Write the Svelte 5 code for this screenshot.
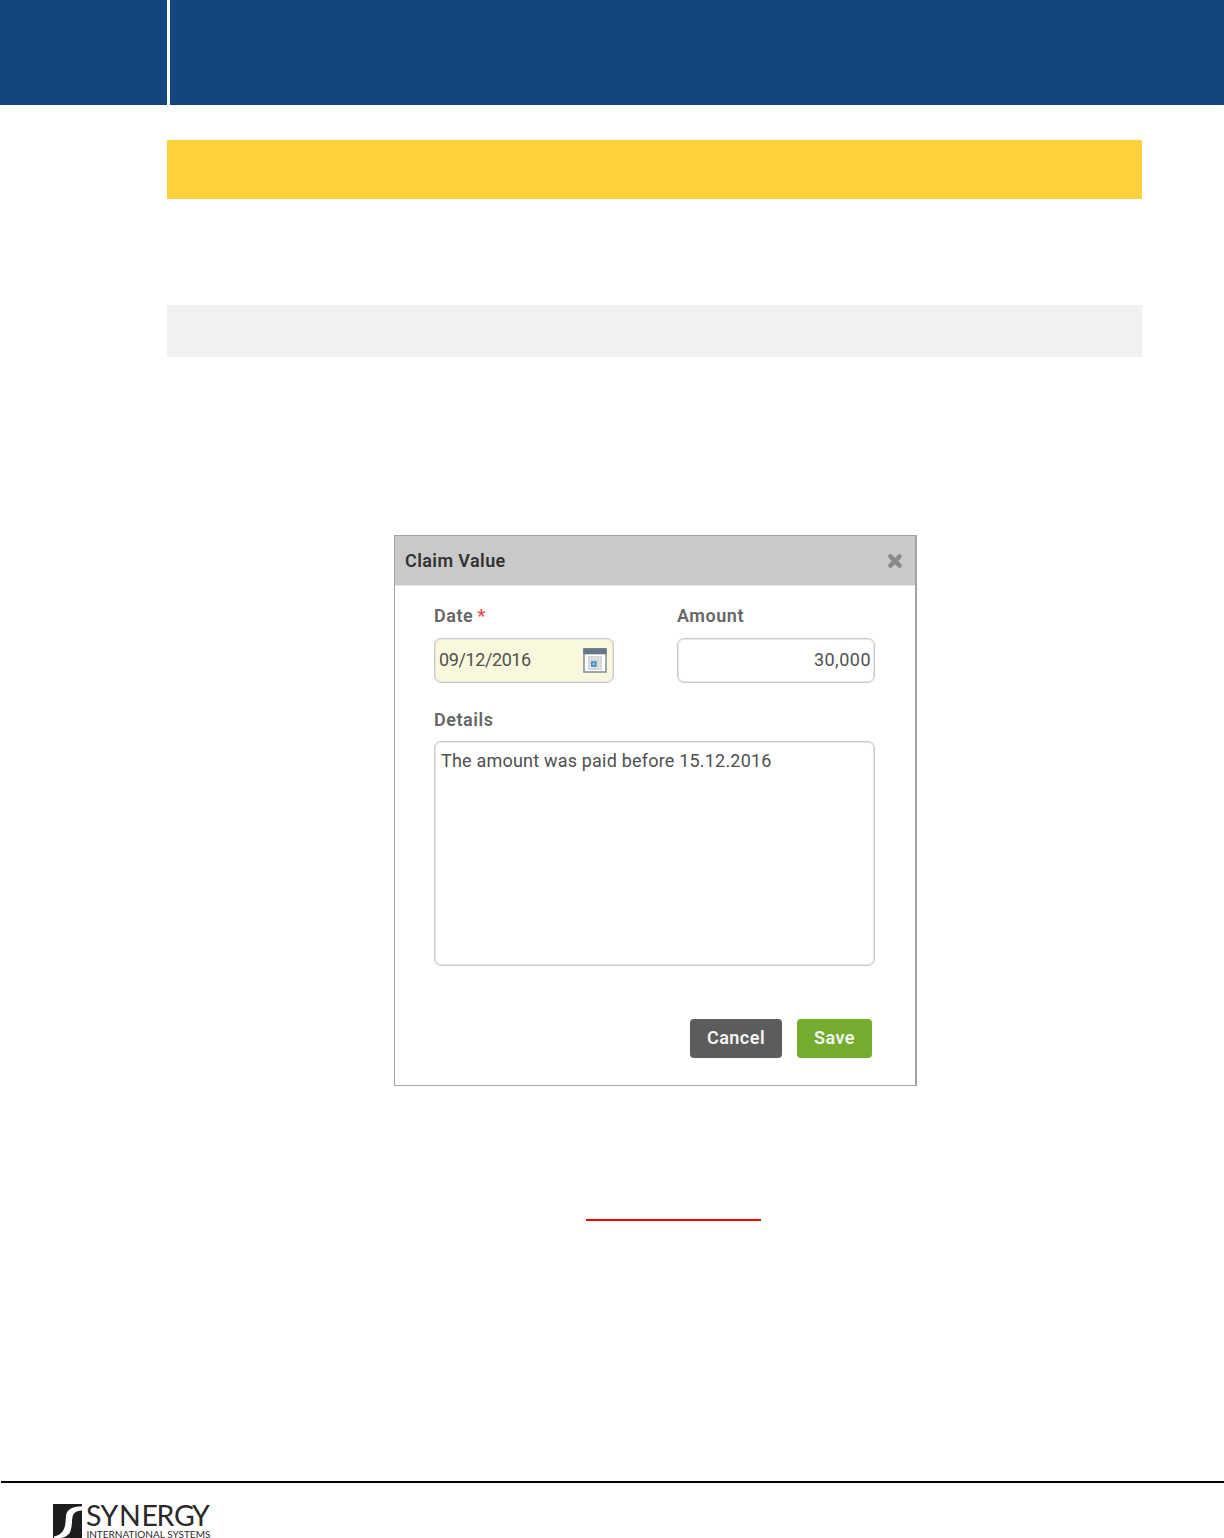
<script lang="ts">
	let date = $state("09/12/2016");
	let amount = $state("30,000");
	let details = $state("The amount was paid before 15.12.2016");

	const gridLines = [0, 3, 6, 9, 12];
</script>

<div class="page">
	<header class="banner">
		<div class="banner-side"></div>
		<div class="banner-main"></div>
	</header>

	<main>
		<div class="band yellow"></div>
		<div class="band grey"></div>

		<section class="dialog">
			<div class="title-bar">
				<h1>Claim Value</h1>
				<button class="close" aria-label="Close">
					<svg width="16" height="16" viewBox="0 0 16 16">
						<path d="M3.4 3.4 12.6 12.6M12.6 3.4 3.4 12.6" />
					</svg>
				</button>
			</div>

			<form onsubmit={(e) => e.preventDefault()}>
				<div class="row">
					<div class="field date">
						<label for="date">Date <span class="required">*</span></label>
						<div class="control filled">
							<input id="date" bind:value={date} />
							<svg class="calendar" width="24" height="25" viewBox="0 0 24 25">
								<rect x="1" y="1" width="22" height="23" fill="#fff" stroke="#8493a0" stroke-width="1.6" />
								<rect x=".3" y=".3" width="23.4" height="6" fill="#647687" />
								<rect x="5" y="8" width="14" height="14" fill="#ececec" />
								{#each gridLines as n}
									<path d="M{6 + n} 8v14M5 {9 + n}h14" stroke="#c6c8ca" stroke-width=".8" />
								{/each}
								<rect x="8.8" y="14" width="4" height="4" fill="#9bcbe8" stroke="#3c86ba" stroke-width="1.5" />
							</svg>
						</div>
					</div>
					<div class="field amount">
						<label for="amount">Amount</label>
						<div class="control">
							<input id="amount" bind:value={amount} />
						</div>
					</div>
				</div>

				<div class="field">
					<label for="details">Details</label>
					<textarea id="details" spellcheck="false" bind:value={details}></textarea>
				</div>

				<div class="actions">
					<button class="action cancel" type="button">Cancel</button>
					<button class="action save">Save</button>
				</div>
			</form>
		</section>

		<div class="underline"></div>
	</main>

	<footer>
		<svg class="logo" width="160" height="34" viewBox="0 0 160 34">
			<rect width="29" height="34" fill="#1e1c1d" />
			<path
				d="M29 2.2C19 2.4 13.6 5.5 13 12C12.4 19 13.2 30.3 1 32.5V34H8C17.4 32.5 18.5 26 19 18C19.4 11 20.2 6.9 29 6.5Z"
				fill="#fff" />
			<text class="name" x="33 47.5 66 88.5 103.5 121 139" y="22.2">SYNERGY</text>
			<text class="tagline" x="33.4" y="34" textLength="124" lengthAdjust="spacingAndGlyphs">INTERNATIONAL SYSTEMS</text>
		</svg>
	</footer>
</div>

<style>
	:global(body) {
		margin: 0;
		background: #fff;
	}

	.page {
		width: 1224px;
		height: 1538px;
		overflow: hidden;
		display: flex;
		flex-direction: column;
		font-family: Roboto, "Liberation Sans", sans-serif;
	}

	.page * {
		box-sizing: border-box;
	}

	.banner {
		display: grid;
		grid-template-columns: 167px 1fr;
		gap: 3px;
		height: 105px;
	}

	.banner div {
		background: #14457e;
	}

	main {
		flex: 1;
		width: 975px;
		margin-left: 167px;
		padding-top: 35px;
		display: flex;
		flex-direction: column;
	}

	.band.yellow {
		height: 59px;
		background: #ffcf3c;
	}

	.band.grey {
		height: 52px;
		margin-top: 106px;
		background: #f1f1f1;
	}

	.dialog {
		width: 523px;
		height: 551px;
		margin: 178px 0 0 227px;
		border: 1px solid #a3a3a3;
		border-right-width: 2px;
	}

	.title-bar {
		height: 50px;
		padding: 0 12px 0 10px;
		display: flex;
		align-items: center;
		justify-content: space-between;
		background: #c9c9c9;
		border-bottom: 1px solid #e6e6e6;
	}

	h1 {
		margin: 0;
		font-size: 18px;
		font-weight: 600;
		color: #333;
		letter-spacing: 0.4px;
	}

	.close {
		padding: 0;
		border: 0;
		background: none;
		display: flex;
	}

	.close path {
		stroke: #898989;
		stroke-width: 4.4;
		stroke-linecap: round;
	}

	form {
		padding: 19px 40px 0 39px;
		display: flex;
		flex-direction: column;
	}

	.row {
		display: flex;
		justify-content: space-between;
		margin-bottom: 26px;
	}

	.field {
		display: flex;
		flex-direction: column;
	}

	.date {
		width: 180px;
	}

	.amount {
		width: 198px;
	}

	label {
		height: 22px;
		margin-bottom: 10px;
		line-height: 22px;
		font-size: 18px;
		font-weight: 600;
		color: #666;
		letter-spacing: 0.55px;
	}

	.row label {
		margin-bottom: 11px;
	}

	.required {
		margin-left: -1px;
		color: #e84c4c;
	}

	.control,
	textarea {
		border: 1px solid #c8c8c8;
		border-radius: 7px;
		box-shadow: inset 0 0 0 1px #e6e6e6;
	}

	.control {
		height: 45px;
		padding: 0 5px;
		display: flex;
		align-items: center;
	}

	.control.filled {
		padding-right: 6px;
		background: #faf8dc;
	}

	input,
	textarea {
		min-width: 0;
		outline: 0;
		background: none;
		font: 18px/22px Roboto, "Liberation Sans", sans-serif;
		color: #505050;
	}

	input {
		flex: 1;
		padding: 0 0 2px;
		border: 0;
		letter-spacing: 0.5px;
	}

	.date input {
		margin-left: -1px;
		letter-spacing: -0.4px;
	}

	.amount input {
		text-align: right;
		margin-right: -2px;
	}

	textarea {
		height: 225px;
		padding: 8px 6px;
		resize: none;
		letter-spacing: 0.2px;
	}

	.actions {
		display: flex;
		justify-content: flex-end;
		gap: 15px;
		margin-top: 53px;
		padding-right: 3px;
	}

	.action {
		height: 39px;
		padding: 0 0 2px;
		border: 0;
		border-radius: 4px;
		font: 600 18px Roboto, "Liberation Sans", sans-serif;
		color: #f4f4f4;
		letter-spacing: 0.5px;
	}

	.cancel {
		width: 92px;
		background: #5c5c5c;
	}

	.save {
		width: 75px;
		background: #74ad2e;
	}

	.underline {
		width: 175px;
		height: 2px;
		margin: 133px 0 0 419px;
		background: #f00;
	}

	footer {
		height: 57px;
		margin-left: 1px;
		padding: 21px 0 0 52px;
		border-top: 2px solid #000;
	}

	.logo {
		display: block;
		overflow: hidden;
	}

	.logo text {
		font-family: Lato, sans-serif;
		fill: #2a2829;
	}

	.logo .name {
		font-size: 28.5px;
	}

	.logo .tagline {
		font-size: 9.5px;
	}
</style>
